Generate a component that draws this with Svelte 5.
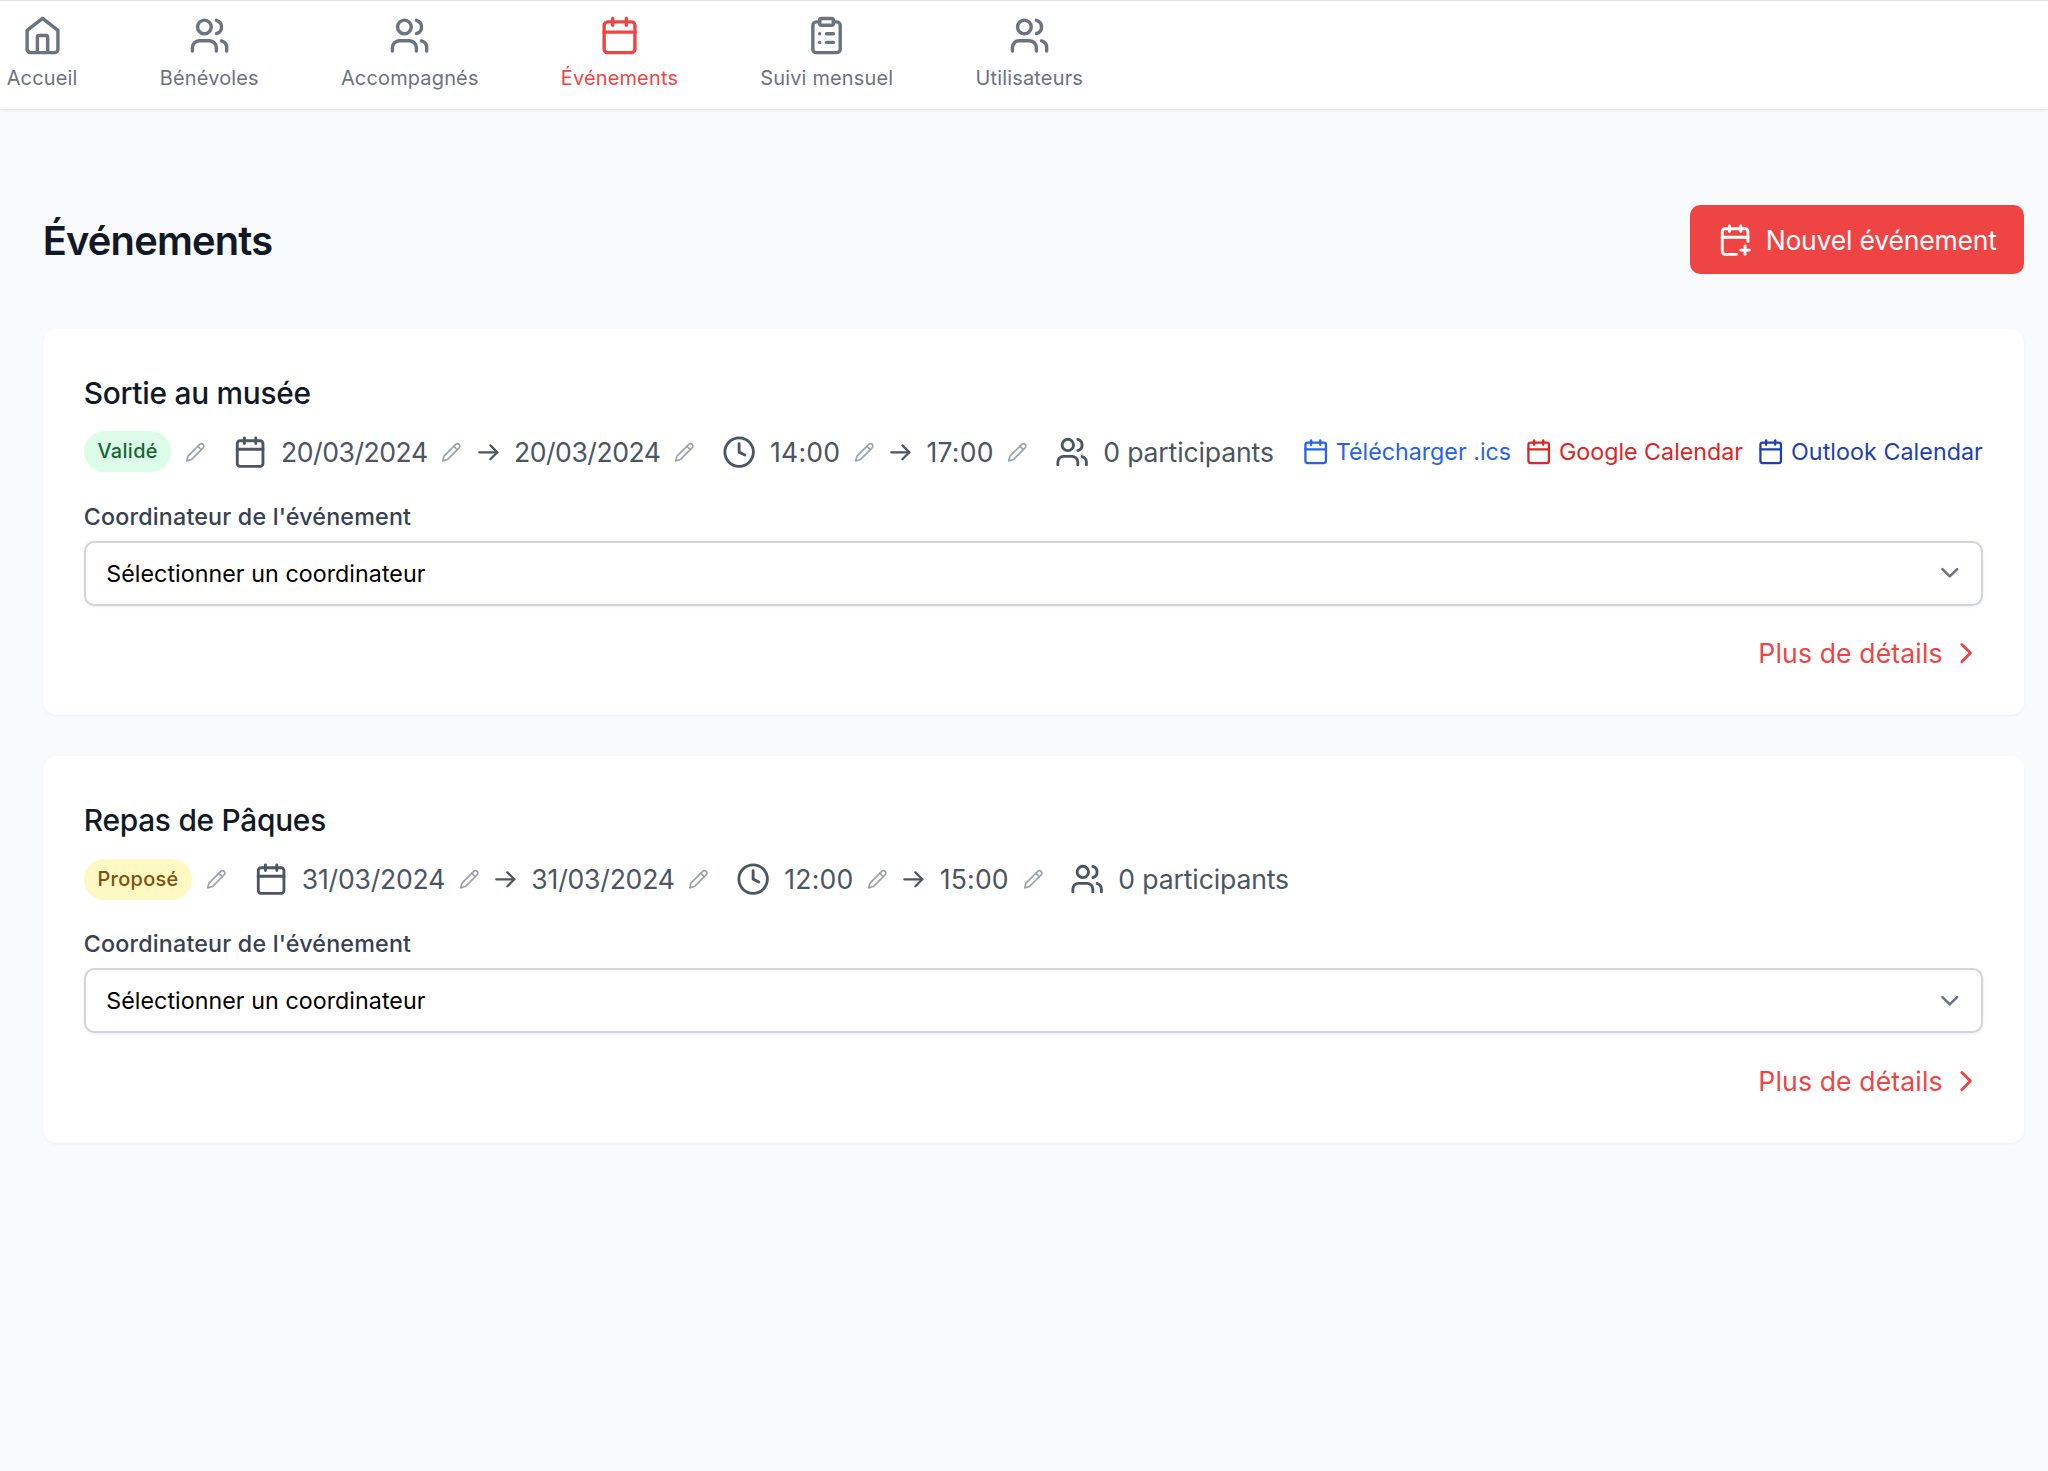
<script>
	const icons = {
		home: ['M15 21v-8a1 1 0 0 0-1-1h-4a1 1 0 0 0-1 1v8', 'm3 9 9-7 9 7v11a2 2 0 0 1-2 2H5a2 2 0 0 1-2-2z'],
		users: ['M16 21v-2a4 4 0 0 0-4-4H6a4 4 0 0 0-4 4v2', 'M5 7a4 4 0 1 0 8 0a4 4 0 1 0-8 0', 'M22 21v-2a4 4 0 0 0-3-3.87', 'M16 3.13a4 4 0 0 1 0 7.75'],
		calendar: ['M8 2v4', 'M16 2v4', 'M5 4h14a2 2 0 0 1 2 2v14a2 2 0 0 1-2 2H5a2 2 0 0 1-2-2V6a2 2 0 0 1 2-2z', 'M3 10h18'],
		calendarPlus: ['M8 2v4', 'M16 2v4', 'M21 13V6a2 2 0 0 0-2-2H5a2 2 0 0 0-2 2v14a2 2 0 0 0 2 2h8', 'M3 10h18', 'M16 19h6', 'M19 16v6'],
		clipboard: ['M9 2h6a1 1 0 0 1 1 1v2a1 1 0 0 1-1 1H9a1 1 0 0 1-1-1V3a1 1 0 0 1 1-1z', 'M16 4h2a2 2 0 0 1 2 2v14a2 2 0 0 1-2 2H6a2 2 0 0 1-2-2V6a2 2 0 0 1 2-2h2', 'M12 11h4', 'M12 16h4', 'M8 11h.01', 'M8 16h.01'],
		clock: ['M2 12a10 10 0 1 0 20 0a10 10 0 1 0-20 0', 'M12 6v6l4 2'],
		pencil: ['M17 3a2.85 2.83 0 1 1 4 4L7.5 20.5 2 22l1.5-5.5Z', 'm15 5 4 4'],
		arrow: ['M3.2 12h17.6', 'm14 5.2 6.8 6.8-6.8 6.8'],
		right: ['m9 18 6-6-6-6'],
		down: ['m6 9 6 6 6-6']
	};

	const nav = [
		{ label: 'Accueil', icon: 'home' },
		{ label: 'Bénévoles', icon: 'users' },
		{ label: 'Accompagnés', icon: 'users' },
		{ label: 'Événements', icon: 'calendar', active: true },
		{ label: 'Suivi mensuel', icon: 'clipboard' },
		{ label: 'Utilisateurs', icon: 'users' }
	];

	const events = [
		{ title: 'Sortie au musée', status: 'Validé', valid: true, date: '20/03/2024', start: '14:00', end: '17:00' },
		{ title: 'Repas de Pâques', status: 'Proposé', valid: false, date: '31/03/2024', start: '12:00', end: '15:00' }
	];
</script>

{#snippet icon(name, size)}
	<svg class="icon {size}" viewBox="0 0 24 24">
		{#each icons[name] as d}
			<path {d} />
		{/each}
	</svg>
{/snippet}

{#snippet edit()}
	<button class="edit" aria-label="Modifier">{@render icon('pencil', 'xs')}</button>
{/snippet}

<nav>
	{#each nav as item}
		<a href="#top" class="nav-item" class:active={item.active}>
			{@render icon(item.icon, 'lg')}
			<span>{item.label}</span>
		</a>
	{/each}
</nav>

<main>
	<header>
		<h1>Événements</h1>
		<button class="new">{@render icon('calendarPlus', 'md')}<span class="value">Nouvel événement</span></button>
	</header>

	{#each events as event}
		<section class="card">
			<h2>{event.title}</h2>
			<div class="row">
				<div class="group">
					<span class="badge" class:valid={event.valid}>{event.status}</span>
					{@render edit()}
				</div>
				<div class="group dates" class:tight={event.valid}>
					{@render icon('calendar', 'md')}
					<span class="value">{event.date}</span>
					{@render edit()}
					{@render icon('arrow', 'to')}
					<span class="value">{event.date}</span>
					{@render edit()}
				</div>
				<div class="group times">
					{@render icon('clock', 'md')}
					<span class="value">{event.start}</span>
					{@render edit()}
					{@render icon('arrow', 'to')}
					<span class="value">{event.end}</span>
					{@render edit()}
				</div>
				<div class="group people">
					{@render icon('users', 'md')}
					<span class="value">0 participants</span>
				</div>
				{#if event.valid}
					<div class="links">
						<a href="#ics" class="ics">{@render icon('calendar', 'sm')}<span>Télécharger .ics</span></a>
						<a href="#google" class="google">{@render icon('calendar', 'sm')}<span>Google Calendar</span></a>
						<a href="#outlook" class="outlook">{@render icon('calendar', 'sm')}<span>Outlook Calendar</span></a>
					</div>
				{/if}
			</div>
			<div class="label">Coordinateur de l'événement</div>
			<button class="select"><span>Sélectionner un coordinateur</span>{@render icon('down', 'chevron')}</button>
			<div class="more">
				<a href="#details"><span class="value">Plus de détails</span>{@render icon('right', 'md')}</a>
			</div>
		</section>
	{/each}
</main>

<style>
	:global(html) {
		font-size: 27.375px;
	}

	:global(body) {
		background: #f9fafb;
		font-family: Inter, 'Liberation Sans', sans-serif;
		font-size: 0.97rem;
		line-height: 1.5rem;
		color: #111827;
	}

	a {
		text-decoration: none;
		color: inherit;
	}

	button {
		font: inherit;
		border: none;
		background: none;
		padding: 0;
		margin: 0;
	}

	h1, h2 {
		margin: 0;
	}

	span {
		white-space: nowrap;
	}

	.icon {
		display: block;
		flex-shrink: 0;
		fill: none;
		stroke: currentColor;
		stroke-width: 2;
		stroke-linecap: round;
		stroke-linejoin: round;
	}

	.xs { width: 0.75rem; height: 0.75rem; }
	.sm { width: 1rem; height: 1rem; }
	.md { width: 1.25rem; height: 1.25rem; }
	.lg { width: 1.5rem; height: 1.5rem; }
	.to { width: 0.9rem; height: 0.9rem; stroke-width: 2.2; }
	.chevron { width: 1.08rem; height: 1.08rem; }

	nav {
		box-sizing: border-box;
		height: 109px;
		display: flex;
		align-items: flex-start;
		gap: 3rem;
		padding: 14px 0 0 6.7px;
		background: #fff;
		border-top: 1px solid #dfe3e8;
		box-shadow: 0 1px 3px rgba(0, 0, 0, 0.1);
	}

	.nav-item {
		display: flex;
		flex-direction: column;
		align-items: center;
		gap: 0.32rem;
		font-size: 0.7275rem;
		line-height: 1rem;
		letter-spacing: 0.2px;
		color: #6b7280;
	}

	.nav-item.active {
		color: #ef4444;
	}

	main {
		padding: 96.4px 24px 0 42.7px;
	}

	header {
		display: flex;
		justify-content: space-between;
		align-items: center;
		margin-bottom: 54.9px;
	}

	h1 {
		padding-top: 3px;
		font-size: 1.455rem;
		font-weight: 600;
		line-height: 2rem;
		letter-spacing: -0.02em;
	}

	.new {
		display: flex;
		align-items: center;
		gap: 0.5rem;
		height: 2.5rem;
		padding: 0 1rem;
		border-radius: 0.375rem;
		background: #ef4444;
		color: #fff;
		letter-spacing: -0.22px;
	}

	.card {
		background: #fff;
		padding: 1.5rem;
		border-radius: 0.5rem;
		margin-bottom: 1.5rem;
		box-shadow: 0 1px 3px rgba(0, 0, 0, 0.05);
	}

	h2 {
		font-size: 1.09rem;
		line-height: 1.75rem;
		font-weight: 500;
		letter-spacing: -0.25px;
	}

	.row {
		display: flex;
		align-items: center;
		height: 1.5rem;
		margin-top: 0.5rem;
		color: #4b5563;
	}

	.value {
		padding-top: 1px;
	}

	.group, .links, .links a {
		display: flex;
		align-items: center;
	}

	.group {
		gap: 0.5rem;
		margin-right: 1rem;
	}

	.dates {
		letter-spacing: -0.2px;
	}

	.dates.tight {
		letter-spacing: -0.44px;
	}

	.times {
		letter-spacing: 0.22px;
	}

	.people {
		letter-spacing: -0.12px;
		margin-right: 0;
	}

	.badge {
		font-size: 0.7275rem;
		line-height: 1.5rem;
		font-weight: 500;
		letter-spacing: 0.33px;
		padding: 0 0.5rem;
		border-radius: 1rem;
		background: #fef9c3;
		color: #854d0e;
	}

	.badge.valid {
		background: #dcfce7;
		color: #166534;
	}

	.edit {
		color: #9ca3af;
	}

	.links {
		gap: 0.5rem;
		margin-left: auto;
		font-size: 0.849rem;
	}

	.links a {
		gap: 0.25rem;
	}

	.ics { color: #2563eb; }
	.google { color: #dc2626; }
	.outlook {
		color: #1e40af;
		letter-spacing: 0.07px;
	}

	.label {
		margin-top: 1rem;
		font-size: 0.849rem;
		line-height: 1.25rem;
		font-weight: 500;
		letter-spacing: 0.2px;
		color: #374151;
	}

	.select {
		box-sizing: border-box;
		display: flex;
		justify-content: space-between;
		align-items: center;
		width: 100%;
		height: 2.375rem;
		margin-top: 0.24rem;
		padding: 0 16.5px 0 20.5px;
		border: 2px solid #d1d5db;
		border-radius: 0.375rem;
		box-shadow: 0 1px 3px rgba(0, 0, 0, 0.08);
		font-size: 0.849rem;
		letter-spacing: 0.05px;
		color: #000;
	}

	.select .icon {
		color: #6b7280;
	}

	.more {
		display: flex;
		justify-content: flex-end;
		align-items: center;
		height: 1.5rem;
		margin-top: 1rem;
		letter-spacing: 0.15px;
		color: #ef4444;
	}

	.more a {
		display: flex;
		align-items: center;
		gap: 0.22rem;
	}
</style>
